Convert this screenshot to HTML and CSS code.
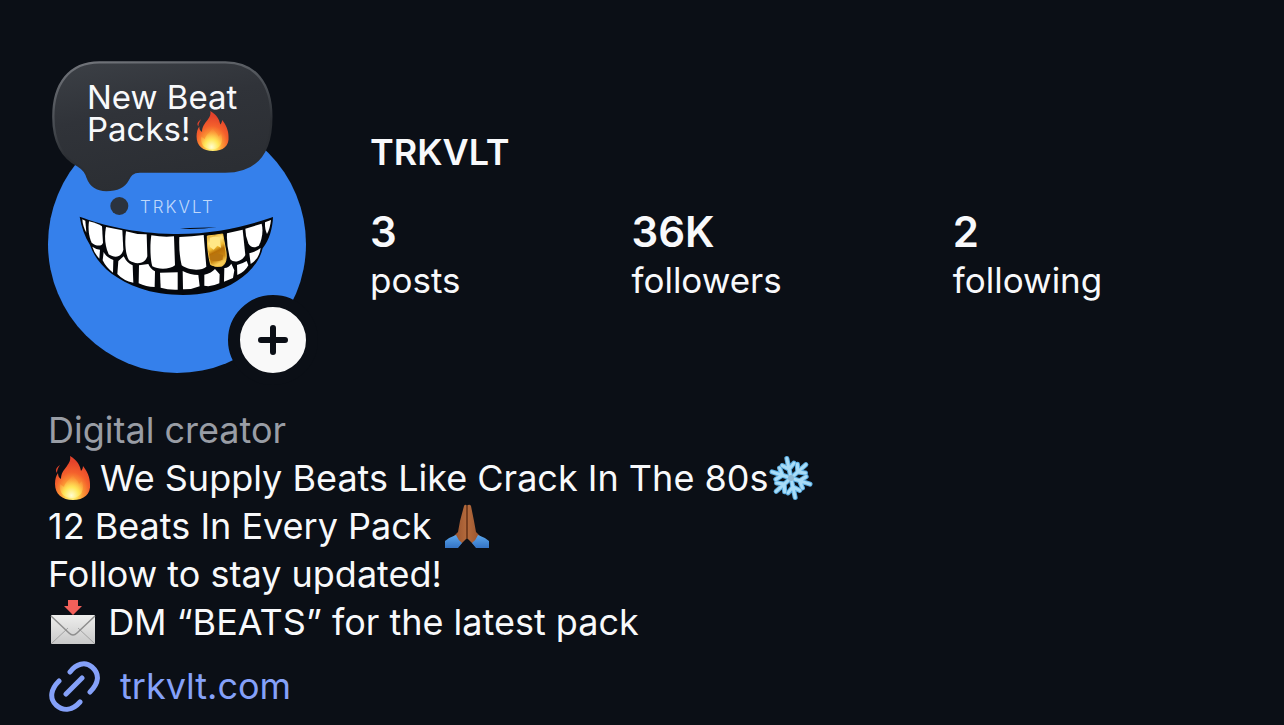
FILE: index.html
```html
<!DOCTYPE html>
<html lang="en">
<head>
<meta charset="utf-8">
<meta name="viewport" content="width=device-width, initial-scale=1">
<title>TRKVLT</title>
<link rel="stylesheet" href="styles.css">
</head>
<body>
<svg class="defs" width="0" height="0" aria-hidden="true">
  <defs>
    <radialGradient id="flame" cx=".48" cy=".88" r=".75">
      <stop offset="0" stop-color="#fffbb0"/><stop offset=".2" stop-color="#ffe25a"/><stop offset=".42" stop-color="#fc9a35"/><stop offset=".68" stop-color="#f4602c"/><stop offset="1" stop-color="#e4432b"/>
    </radialGradient>
    <radialGradient id="flame-core" cx=".5" cy=".9" r=".85">
      <stop offset="0" stop-color="#fffdd0"/><stop offset=".4" stop-color="#ffe657"/><stop offset="1" stop-color="#fc8a3a" stop-opacity="0"/>
    </radialGradient>
    <symbol id="fire" viewBox="0 0 46 46">
      <path fill="url(#flame)" d="M20 1c7 4 10 9 11 15 1-1 2-3 2-5 4 5 7 11 7 18 1 10-6 16-17 16S5 39 5 29c0-5 1-8 3-11 0 3 1 5 3 6 0-6 3-9 6-13 2-3 4-6 3-10z"/>
      <path fill="#e2442b" d="M10 10c-4 3-5 5-3 8 0-3 1-5 3-8z"/>
      <path fill="url(#flame-core)" d="M23 18c0 5 5 7 6 11l3-3c3 9-1 17-10 17S9 37 10 29c1 1 3 2 4 3 1-6 8-8 9-14z"/>
    </symbol>
  </defs>
</svg>
<main class="profile">
  <header class="profile-header">
    <div class="avatar">
      <svg class="avatar-image" viewBox="48 115 258 258" role="img" aria-label="Profile picture">
        <defs>
          <linearGradient id="gold" x1="0" y1="0" x2=".3" y2="1">
            <stop offset="0" stop-color="#d9961c"/><stop offset=".3" stop-color="#ffe681"/><stop offset=".5" stop-color="#efb72e"/><stop offset=".62" stop-color="#b87008"/><stop offset=".85" stop-color="#c98713"/><stop offset="1" stop-color="#f8cb55"/>
          </linearGradient>
        </defs>
        <circle cx="177" cy="244" r="129" fill="#3580eb"/>
        <g transform="translate(70 195) scale(.33333)">
          <path fill="#05070b" d="M29 65C100 91 190 114 310 117C430 119 535 92 609 66C608 99 598 135 578 160C565 218 500 275 420 292C360 305 270 302 210 280C130 252 78 205 60 150C44 124 34 96 29 65zM330 101C370 103 410 101 440 96C405 98 370 98 330 101z"/>
          <g fill="#fff">
            <path d="M37 73l9 4 3 36C42 101 38 88 37 73z"/>
            <path d="M57 79C72 83 88 88 96 94L99 143C96 155 78 154 65 143C56 124 54 100 57 79z"/>
            <path d="M108 96L157 106L160 164C154 187 135 191 116 178C104 151 103 123 108 96z"/>
            <path d="M168 109Q200 119 230 118L232 184C226 207 197 210 177 196C165 176 164 137 168 109z"/>
            <path d="M244 121Q279 127 312 124L315 211C302 223 265 225 247 214C240 190 240 147 244 121z"/>
            <path d="M328 126Q366 125 401 120L409 215C395 229 353 226 335 211Q326 174 328 126z"/>
            <path d="M471 115L518 104L526 180C516 199 493 206 481 193Q469 154 471 115z"/>
            <path d="M526 101L575 86C581 112 575 134 567 151C554 162 541 157 535 145Q526 124 526 101z"/>
            <path d="M585 82L603 75Q600 101 591 117Q584 103 585 82z"/>
            <path d="M67 155Q78 163 90 164L88 191Q73 175 67 155z"/>
            <path d="M101 171Q107 185 130 195L129 233Q108 217 98 196z"/>
            <path d="M145 198L161 184Q172 206 188 211L190 263Q160 257 142 237z"/>
            <path d="M207 211L235 207Q241 222 255 229L254 276Q228 276 206 265z"/>
            <path d="M270 233L323 232L323 284Q294 285 272 278z"/>
            <path d="M338 228Q361 240 385 240L389 274Q366 284 339 283z"/>
            <path d="M403 239Q425 234 435 222L449 238L448 265Q422 277 403 272z"/>
            <path d="M463 219Q474 220 484 206L493 226L489 249L462 260z"/>
            <path d="M501 210Q521 204 530 198L535 211Q525 231 502 240z"/>
            <path d="M538 175Q558 170 572 159Q568 192 542 207z"/>
          </g>
          <path fill="url(#gold)" stroke="#f7c64b" stroke-width="3" d="M412 123Q434 121 458 117L468 171Q472 203 457 213Q438 218 422 209Q412 173 412 123z"/>
          <path fill="#ffe786" d="M420 128Q438 123 449 128L453 158L442 152L431 164L420 156z"/>
          <path fill="#b87510" d="M419 180Q431 184 440 174L459 180L458 194Q436 203 422 195z"/>
        </g>
      </svg>
      <span class="avatar-name">TRKVLT</span>
      <div class="note">
        <svg class="note-shape" viewBox="36 30 663 468" aria-hidden="true">
          <defs>
            <linearGradient id="note-fill" x1="0" y1="0" x2=".35" y2="1"><stop offset="0" stop-color="#3c4046"/><stop offset=".45" stop-color="#303339"/><stop offset="1" stop-color="#2b2e33"/></linearGradient>
            <linearGradient id="note-edge" x1="0" y1="0" x2=".3" y2="1"><stop offset="0" stop-color="#74777d"/><stop offset=".45" stop-color="#484c52"/><stop offset=".7" stop-color="#2b2e33"/></linearGradient>
          </defs>
          <path fill="url(#note-fill)" stroke="url(#note-edge)" stroke-width="7" d="M178 37H556C646 37 694 102 694 200C694 302 655 364 556 365H300C275 365 270 376 263 390C252 411 226 420 199 420C169 420 151 405 143 383C138 365 130 356 115 347C68 323 40 274 40 200C40 102 88 37 178 37z"/>
          <circle cx="238" cy="468" r="27" fill="#2b333e"/>
        </svg>
        <p class="note-text">New Beat<br>Packs!<svg class="note-emoji" role="img" aria-label="fire"><use href="#fire"/></svg></p>
      </div>
      <button class="add" type="button" aria-label="Add to story">
        <svg class="add-icon" viewBox="0 0 30 30" aria-hidden="true"><path d="M15 3V27M3 15H27" fill="none" stroke="#0b0f16" stroke-width="6" stroke-linecap="round"/></svg>
      </button>
    </div>
    <div class="info">
      <h1 class="name">TRKVLT</h1>
      <ul class="stats">
        <li><strong class="count">3</strong><span>posts</span></li>
        <li><strong class="count">36K</strong><span>followers</span></li>
        <li><strong class="count">2</strong><span>following</span></li>
      </ul>
    </div>
  </header>
  <section class="bio">
    <p class="category">Digital creator</p>
    <p><svg class="emoji" role="img" aria-label="fire"><use href="#fire"/></svg><span class="after-fire">We Supply Beats Like Crack In The 80s</span><svg class="emoji snow" viewBox="0 0 46 46" role="img" aria-label="snowflake">
      <defs><g id="arm"><path d="M23 23V3M23 14l-6-5M23 14l6-5"/></g></defs>
      <g transform="rotate(-12 23 23)" fill="none" stroke-linecap="round">
        <g stroke="#5aaee3" stroke-width="5"><use href="#arm"/><use href="#arm" transform="rotate(60 23 23)"/><use href="#arm" transform="rotate(120 23 23)"/><use href="#arm" transform="rotate(180 23 23)"/><use href="#arm" transform="rotate(240 23 23)"/><use href="#arm" transform="rotate(300 23 23)"/></g>
        <g stroke="#a9dcf7" stroke-width="3"><use href="#arm"/><use href="#arm" transform="rotate(60 23 23)"/><use href="#arm" transform="rotate(120 23 23)"/><use href="#arm" transform="rotate(180 23 23)"/><use href="#arm" transform="rotate(240 23 23)"/><use href="#arm" transform="rotate(300 23 23)"/></g>
      </g>
      <circle cx="23" cy="23" r="3" fill="#8fb9d4"/>
    </svg></p>
    <p>12 Beats In Every Pack <svg class="emoji" viewBox="0 0 46 46" role="img" aria-label="folded hands">
      <defs>
        <linearGradient id="skin"><stop offset="0" stop-color="#8d4a27"/><stop offset=".5" stop-color="#b56b3d"/><stop offset="1" stop-color="#8f4c29"/></linearGradient>
        <linearGradient id="sleeve" x1="0" y1="0" x2="0" y2="1"><stop offset="0" stop-color="#5ba7ee"/><stop offset="1" stop-color="#3473c4"/></linearGradient>
      </defs>
      <path fill="url(#skin)" d="M20 3q1-2 2-1l1 1 1-1q2-1 3 1l3 15 2 11 8 8-8 7-9-9-9 9-8-7 8-8 2-11z"/>
      <path d="M23 3v32" stroke="#633016" stroke-width="1.500"/>
      <path fill="url(#sleeve)" d="M1 38q5-4 11-6 2 5 6 8l-4 5H1zM45 38q-5-4-11-6-2 5-6 8l4 5h13z"/>
    </svg></p>
    <p>Follow to stay updated!</p>
    <p><svg class="emoji" viewBox="0 0 46 46" role="img" aria-label="envelope with arrow">
      <defs><linearGradient id="paper" x1="0" y1="0" x2="0" y2="1"><stop offset="0" stop-color="#eeeeed"/><stop offset="1" stop-color="#c9c9c9"/></linearGradient></defs>
      <rect x="1" y="16" width="44" height="29" rx="1" fill="url(#paper)"/>
      <path d="M2 44l16-15M44 44L28 29" stroke="#a3a3a3" fill="none"/>
      <path d="M1 17l18 17q4 4 8 0l18-17" fill="none" stroke="#8e8e8e" stroke-width="1.500"/>
      <path fill="#f2605a" d="M18 1h10v6h4L23 16 14 7h4z"/>
    </svg> DM “BEATS” for the latest pack</p>
  </section>
  <a class="site" href="#site">
    <svg class="site-icon" viewBox="0 0 52 52" fill="none" stroke="#85a1f9" stroke-width="5" stroke-linecap="round" aria-hidden="true">
      <path d="M22 12C28 4 37 1 44 7C52 14 51 23 42 32M11 21C3 29 1 38 8 45C16 52 25 50 32 42M18 34L34 18"/>
    </svg>
    <span>trkvlt.com</span>
  </a>
</main>
</body>
</html>
```

FILE: styles.css
```css
* { box-sizing: border-box; }
body {
  margin: 0;
  background: #0b0f16;
  color: #f8f9fb;
  font-family: Inter, "Liberation Sans", sans-serif;
  font-size: 36px;
  line-height: 48px;
}
p, h1, ul { margin: 0; padding: 0; }
.defs { position: absolute; }
.profile { padding: 115px 48px 8px; }
.profile-header { display: flex; gap: 64px; }
.avatar { position: relative; flex: none; width: 258px; height: 258px; }
.avatar-image { display: block; width: 100%; }
.avatar-name {
  position: absolute;
  left: 92px;
  top: 80px;
  color: #bfd8fb;
  font-size: 17px;
  font-weight: 300;
  line-height: 24px;
  letter-spacing: 2px;
}
.note { position: absolute; left: 4px; top: -55px; width: 221px; }
.note-shape { display: block; width: 100%; }
.note-text {
  position: absolute;
  left: 35px;
  top: 21px;
  font-size: 33px;
  line-height: 32px;
  white-space: nowrap;
}
.note-emoji { width: 42px; height: 42px; margin: -5px 0 -5px 2px; vertical-align: -6px; }
.add {
  position: absolute;
  right: -12px;
  bottom: -12px;
  display: grid;
  place-items: center;
  width: 90px;
  height: 90px;
  padding: 0;
  border: 12px solid #0b0f16;
  border-radius: 50%;
  background: #f9f9f9;
}
.add-icon { width: 30px; height: 30px; }
.info { padding-top: 15px; }
.name { font-size: 36px; font-weight: 600; line-height: 44px; }
.stats { display: flex; gap: 171px; margin-top: 34px; font-size: 35px; list-style: none; }
.stats li { display: flex; flex-direction: column; }
.count { font-size: 42px; font-weight: 600; }
.bio { margin-top: 33px; }
.category { color: #999da5; }
.emoji { width: 46px; height: 46px; margin: -4px 2px; vertical-align: -6px; }
.emoji.snow { margin-left: 0; }
.after-fire { margin-left: 2px; }
.site {
  display: inline-flex;
  align-items: center;
  gap: 20px;
  margin-top: 14px;
  color: #85a1f9;
  text-decoration: none;
}
.site-icon { width: 52px; height: 52px; }
```
